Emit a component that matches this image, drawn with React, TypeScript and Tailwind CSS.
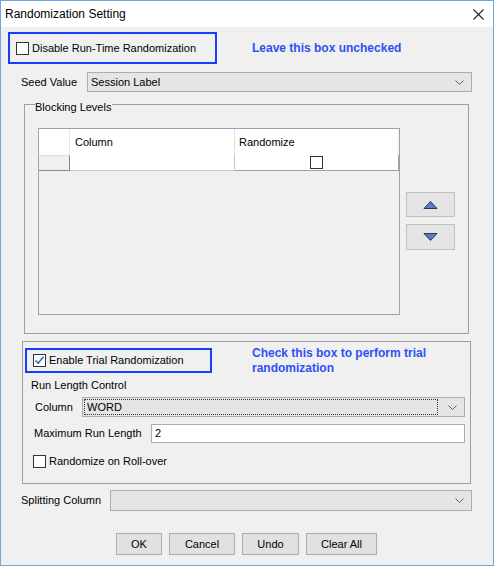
const FONT = "font-['Liberation_Sans',Arial,sans-serif]";

const Chevron = () => (
  <svg width="9" height="5" viewBox="0 0 9 5" className="shrink-0">
    <path d="M0.5 0.5 L4.5 4.5 L8.5 0.5" fill="none" stroke="#606060" strokeWidth="1" />
  </svg>
);

const CheckBox = ({ checked = false }: { checked?: boolean }) => (
  <div className="w-[13px] h-[13px] border border-[#333] bg-white flex items-center justify-center shrink-0">
    {checked && (
      <svg width="11" height="11" viewBox="0 0 11 11">
        <path d="M1.5 5.5 L4.2 8.3 L9.5 1.8" fill="none" stroke="#1f5fb8" strokeWidth="1.4" />
      </svg>
    )}
  </div>
);

const Select = ({
  width,
  height,
  value,
  focused = false,
}: {
  width: number;
  height: number;
  value?: string;
  focused?: boolean;
}) => (
  <div
    className="box-border border border-[#adadad] bg-[#e5e5e5] flex items-center pr-[7px]"
    style={{ width, height }}
  >
    {focused ? (
      <div className="flex-1 h-[16px] ml-[1px] mr-[10px] border border-dotted border-[#333] flex items-center pl-[2px]">
        {value}
      </div>
    ) : (
      <div className="flex-1 pl-[3px]">{value}</div>
    )}
    <Chevron />
  </div>
);

const Triangle = ({ up }: { up?: boolean }) => (
  <svg width="15" height="8" viewBox="0 0 15 8">
    <polygon
      points={up ? "7.5,0.5 14,7.5 1,7.5" : "1,0.5 14,0.5 7.5,7.5"}
      fill="#5b7fb5"
      stroke="#1b3a6d"
      strokeWidth="1"
    />
  </svg>
);

const Button = ({ label, width }: { label: string; width: number }) => (
  <div
    className="box-border h-[22px] border border-[#adadad] bg-[#e1e1e1] flex items-center justify-center"
    style={{ width }}
  >
    {label}
  </div>
);

export default function App() {
  return (
    <div
      className={`w-[494px] h-[566px] box-border border border-[#6fa6e0] bg-[#f0f0f0] flex flex-col text-[11px] text-black ${FONT}`}
    >
      {/* title bar */}
      <div className="h-[26px] bg-white flex items-center justify-between pl-[4px] pr-[9px]">
        <span className="text-[12px]">Randomization Setting</span>
        <svg width="11" height="11" viewBox="0 0 11 11">
          <path d="M0.5 0.5 L10.5 10.5 M10.5 0.5 L0.5 10.5" stroke="#222" strokeWidth="1.1" />
        </svg>
      </div>

      {/* disable run-time */}
      <div className="mt-[5px] flex items-center">
        <div className="ml-[7px] w-[209px] h-[32px] box-border border-2 border-[#1a3cff] flex items-center pl-[6px] gap-[3px]">
          <CheckBox />
          <span>Disable Run-Time Randomization</span>
        </div>
        <span className="ml-[35px] text-[12px] font-bold text-[#2f50f5]">
          Leave this box unchecked
        </span>
      </div>

      {/* seed value */}
      <div className="mt-[8px] flex items-center">
        <span className="ml-[20px] w-[66px]">Seed Value</span>
        <Select width={385} height={20} value="Session Label" />
      </div>

      {/* blocking levels */}
      <div className="relative mt-[12px] ml-[23px] w-[445px] h-[230px] box-border border border-[#a0a0a0] flex items-start pl-[13px] pt-[23px]">
        <span className="absolute left-[10px] top-[-5px] bg-[#f0f0f0] pr-[1px] leading-[14px]">
          Blocking Levels
        </span>
        <div className="w-[362px] h-[187px] box-border border border-[#9ea3a8] flex flex-col">
          <div className="h-[26px] bg-white flex">
            <div className="w-[31px] border-r border-[#e8e8e8]" />
            <div className="w-[165px] border-r border-[#e0e0e0] flex items-center pl-[5px]">Column</div>
            <div className="w-[162px] flex items-center pl-[4px]">Randomize</div>
            <div className="flex-1 bg-[#f7f7f7]" />
          </div>
          <div className="h-[16px] flex">
            <div className="w-[31px] box-border bg-[#f0f0f0] border-t border-t-[#e0e0e0] border-b border-r border-[#8a8a8a]" />
            <div className="w-[165px] box-border bg-white border-r border-b border-[#c8c8c8]" />
            <div className="flex-1 box-border bg-white border-b border-r border-[#a0a0a0] flex items-center justify-center">
              <CheckBox />
            </div>
          </div>
        </div>
        <div className="ml-[6px] mt-[64px] flex flex-col gap-[7px]">
          <div className="w-[49px] h-[25px] box-border border border-[#c0c0c0] bg-[#e4e4e4] flex items-center justify-center">
            <Triangle up />
          </div>
          <div className="w-[49px] h-[26px] box-border border border-[#c0c0c0] bg-[#e4e4e4] flex items-center justify-center">
            <Triangle />
          </div>
        </div>
      </div>

      {/* trial randomization */}
      <div className="mt-[7px] ml-[21px] w-[449px] h-[143px] box-border border border-[#a0a0a0] flex flex-col pt-[4px]">
        <div className="flex items-start">
          <div className="ml-[2px] mt-[2px] w-[187px] h-[25px] box-border border-2 border-[#1a3cff] flex items-center pl-[6px] gap-[3px]">
            <CheckBox checked />
            <span>Enable Trial Randomization</span>
          </div>
          <span className="ml-[40px] w-[200px] text-[12px] leading-[15px] font-bold text-[#2f50f5]">
            Check this box to perform trial randomization
          </span>
        </div>
        <div className="mt-[2px] ml-[8px] leading-[15px]">Run Length Control</div>
        <div className="mt-[4px] flex items-center">
          <span className="ml-[12px] w-[47px]">Column</span>
          <Select width={383} height={20} value="WORD" focused />
        </div>
        <div className="mt-[7px] flex items-center">
          <span className="ml-[11px] w-[117px]">Maximum Run Length</span>
          <div className="w-[314px] h-[19px] box-border border border-[#adadad] bg-white flex items-center pl-[3px]">
            2
          </div>
        </div>
        <div className="mt-[12px] ml-[10px] flex items-center gap-[3px] h-[13px]">
          <CheckBox />
          <span>Randomize on Roll-over</span>
        </div>
      </div>

      {/* splitting column */}
      <div className="mt-[6px] flex items-center">
        <span className="ml-[20px] w-[89px]">Splitting Column</span>
        <Select width={362} height={21} />
      </div>

      {/* buttons */}
      <div className="mt-[22px] ml-[115px] flex gap-[7px]">
        <Button label="OK" width={46} />
        <Button label="Cancel" width={66} />
        <Button label="Undo" width={57} />
        <Button label="Clear All" width={71} />
      </div>
    </div>
  );
}
